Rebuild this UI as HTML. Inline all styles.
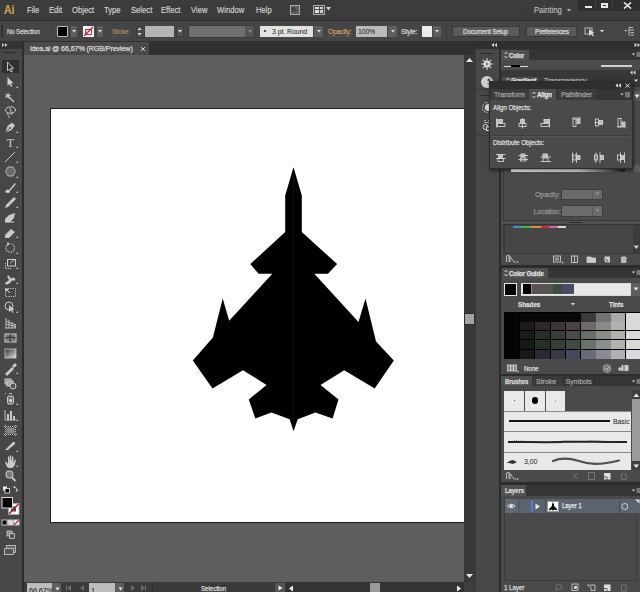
<!DOCTYPE html>
<html><head><meta charset="utf-8">
<style>
*{margin:0;padding:0;box-sizing:border-box}
html,body{width:640px;height:592px;overflow:hidden;background:#4a4a4a;font-family:"Liberation Sans",sans-serif;color:#d6d6d6}
.a{position:absolute}
#menu .t{transform:scaleX(.89);transform-origin:0 0;-webkit-text-stroke:0.15px currentColor}
.t{position:absolute;white-space:nowrap;line-height:1;-webkit-text-stroke:0.25px currentColor}
</style></head><body>

<!-- MENU BAR -->
<div class="a" style="left:0;top:0;width:640px;height:20px;background:#3c3c3c"></div>
<div class="a" style="left:0;top:20px;width:640px;height:1px;background:#2e2e2e"></div>


<!-- MENU TEXT -->
<div class="t" style="left:3.5px;top:2.8px;font-size:13px;font-weight:bold;color:#d9a850;letter-spacing:0px;transform:scaleX(0.8);transform-origin:0 0;-webkit-text-stroke:0">Ai</div>
<div id="menu" style="font-size:8.6px;color:#d6d6d6">
<div class="t" style="left:26.5px;top:5.6px">File</div>
<div class="t" style="left:48.5px;top:5.6px">Edit</div>
<div class="t" style="left:71.5px;top:5.6px">Object</div>
<div class="t" style="left:104px;top:5.6px">Type</div>
<div class="t" style="left:130.5px;top:5.6px">Select</div>
<div class="t" style="left:161px;top:5.6px">Effect</div>
<div class="t" style="left:190.5px;top:5.6px">View</div>
<div class="t" style="left:217px;top:5.6px">Window</div>
<div class="t" style="left:255.5px;top:5.6px">Help</div>
<div class="t" style="left:533.5px;top:5.6px;color:#bdbdbd">Painting</div>
</div>


<!-- menu right icons -->
<div class="a" style="left:280px;top:2px;width:1px;height:16px;background:#383838"></div>
<div class="a" style="left:289.5px;top:5px;width:10px;height:9.5px;border:1px solid #a8a8a8;background:#5c5c5c"></div>
<svg class="a" style="left:291px;top:7px" width="7" height="6"><path d="M1.5,5 V1 H3 Q4,1 4,2 Q4,3 3,3 H1.5 M4,5 V3.5 Q4.5,2.8 5.5,3" stroke="#2a2a2a" stroke-width="0.8" fill="none"/></svg>
<div class="a" style="left:313px;top:4.5px;width:12px;height:10px;border:1px solid #a8a8a8;background:#4a4a4a"></div>
<div class="a" style="left:315px;top:6.5px;width:4px;height:2.5px;background:#e0e0e0"></div>
<div class="a" style="left:315px;top:10px;width:4px;height:2.5px;background:#e0e0e0"></div>
<div class="a" style="left:320px;top:6.5px;width:3px;height:2.5px;background:#d0d0d0"></div>
<div class="a" style="left:320px;top:10px;width:3px;height:2.5px;background:#d0d0d0"></div>
<svg class="a" style="left:326px;top:7px" width="5" height="4"><polygon points="0,0 5,0 2.5,3.5" fill="#d0d0d0"/></svg>
<div class="a" style="left:525px;top:2px;width:1px;height:16px;background:#353535"></div>
<svg class="a" style="left:567px;top:9px" width="4" height="3"><polygon points="0,0 4,0 2,2.5" fill="#bdbdbd"/></svg>
<!-- window buttons -->
<div class="a" style="left:578px;top:0;width:62px;height:10.5px;background:#2f2f2f;border-radius:0 0 0 2px"></div>
<div class="a" style="left:595px;top:0;width:1px;height:10px;background:#404040"></div>
<div class="a" style="left:612px;top:0;width:1px;height:10px;background:#404040"></div>
<div class="a" style="left:584.5px;top:5.5px;width:7px;height:2px;background:#e8e8e8"></div>
<div class="a" style="left:600.5px;top:2.5px;width:7.5px;height:5.5px;border:2px solid #e8e8e8;border-top-width:2px"></div>
<svg class="a" style="left:623px;top:2px" width="9" height="7"><path d="M1,0.5 L8,6.5 M8,0.5 L1,6.5" stroke="#eee" stroke-width="1.6"/></svg>

<!-- CONTROL BAR -->
<div class="a" style="left:0;top:21px;width:640px;height:20px;background:#454545"></div>


<div class="a" style="left:1px;top:25px;width:2px;height:12px;background:#2f2f2f"></div>
<div class="t" style="left:7px;top:27.9px;font-size:7px;color:#d0d0d0;letter-spacing:-0.25px;transform:scaleX(0.89);transform-origin:0 0">No Selection</div>
<div class="a" style="left:51px;top:23px;width:1px;height:16px;background:#404040"></div>
<!-- fill swatch -->
<div class="a" style="left:57px;top:26px;width:11px;height:11px;border:1px solid #bdbdbd;background:#000;border-radius:1px"></div>
<div class="a" style="left:71px;top:26px;width:6px;height:11px;background:#5e5e5e"></div>
<svg class="a" style="left:72px;top:30px" width="4" height="3"><polygon points="0,0 4,0 2,2.5" fill="#e0e0e0"/></svg>
<!-- stroke swatch -->
<div class="a" style="left:83px;top:26px;width:11px;height:11px;background:#f2f2f2"></div>
<svg class="a" style="left:83px;top:26px" width="11" height="11"><rect x="2.5" y="3.5" width="6" height="5" fill="none" stroke="#b03a4a" stroke-width="1"/><path d="M1,10 L10,1" stroke="#c02030" stroke-width="1.2"/></svg>
<div class="a" style="left:97px;top:26px;width:6px;height:11px;background:#5e5e5e"></div>
<svg class="a" style="left:98px;top:30px" width="4" height="3"><polygon points="0,0 4,0 2,2.5" fill="#e0e0e0"/></svg>
<!-- Stroke label -->
<div class="t" style="left:112px;top:28px;font-size:7px;color:#a88358;letter-spacing:-0.2px;transform:scaleX(0.85);transform-origin:0 0">Stroke:</div><div class="a" style="left:112px;top:35.5px;width:17px;height:0;border-top:1px dotted #6a5a48"></div>
<div class="a" style="left:135.5px;top:25.5px;width:9px;height:12px;background:#4a4a4a;border:1px solid #3a3a3a"></div>
<svg class="a" style="left:137px;top:27px" width="5" height="9"><polygon points="0.5,3 4.5,3 2.5,0.5" fill="#ddd"/><polygon points="0.5,6 4.5,6 2.5,8.5" fill="#ddd"/></svg>
<div class="a" style="left:145px;top:26px;width:29px;height:11px;background:#b4b4b4"></div>
<div class="a" style="left:175.5px;top:26px;width:8px;height:11px;background:#505050;border:1px solid #3c3c3c"></div>
<svg class="a" style="left:178px;top:30px" width="4" height="3"><polygon points="0,0 4,0 2,2.5" fill="#e0e0e0"/></svg>
<div class="a" style="left:188px;top:25px;width:66.5px;height:13px;background:#3a3a3a"></div>
<div class="a" style="left:189px;top:26px;width:56px;height:11px;background:#6f6f6f"></div>
<div class="a" style="left:245px;top:26px;width:9px;height:11px;background:#555"></div>
<svg class="a" style="left:248px;top:30px" width="4" height="3"><polygon points="0,0 4,0 2,2.5" fill="#8a8a8a"/></svg>
<div class="a" style="left:260px;top:26px;width:53px;height:11px;background:#e2e2e2"></div>
<div class="a" style="left:263.5px;top:30.3px;width:2px;height:2px;background:#222;border-radius:50%"></div>
<div class="t" style="-webkit-text-stroke:0;left:272px;top:27.8px;font-size:7px;color:#1a1a1a;letter-spacing:-0.1px">3 pt. Round</div>
<div class="a" style="left:314px;top:26px;width:9px;height:11px;background:#5e5e5e"></div>
<svg class="a" style="left:316.5px;top:30px" width="4" height="3"><polygon points="0,0 4,0 2,2.5" fill="#e0e0e0"/></svg>
<!-- Opacity -->
<div class="t" style="left:328px;top:28px;font-size:7px;color:#c29660;letter-spacing:-0.3px">Opacity:</div><div class="a" style="left:328px;top:35.5px;width:23px;height:0;border-top:1px dotted #6a5a48"></div>
<div class="a" style="left:356px;top:26px;width:31px;height:11px;background:#bababa"></div>
<div class="t" style="-webkit-text-stroke:0;left:358px;top:27.8px;font-size:7px;color:#1a1a1a;letter-spacing:-0.2px">100%</div>
<div class="a" style="left:388px;top:26px;width:9px;height:11px;background:#5e5e5e"></div>
<svg class="a" style="left:390.5px;top:30px" width="4" height="3"><polygon points="0,0 4,0 2,2.5" fill="#e0e0e0"/></svg>
<div class="t" style="left:401px;top:28px;font-size:7px;color:#cfcfcf;letter-spacing:-0.2px">Style:</div>
<div class="a" style="left:422px;top:26px;width:10px;height:11px;background:#ececec"></div>
<div class="a" style="left:433px;top:26px;width:8px;height:11px;background:#5e5e5e"></div>
<svg class="a" style="left:435px;top:30px" width="4" height="3"><polygon points="0,0 4,0 2,2.5" fill="#e0e0e0"/></svg>
<div class="a" style="left:446px;top:23px;width:1px;height:16px;background:#3c3c3c"></div>
<!-- buttons -->
<div class="a" style="left:452px;top:26px;width:68px;height:11px;background:#5a5a5a;border:1px solid #3a3a3a"></div>
<div class="t" style="left:463px;top:28px;font-size:7px;color:#d8d8d8;letter-spacing:-0.2px;transform:scaleX(0.91);transform-origin:0 0">Document Setup</div>
<div class="a" style="left:526px;top:26px;width:51px;height:11px;background:#5a5a5a;border:1px solid #3a3a3a"></div>
<div class="t" style="left:534.5px;top:28px;font-size:7px;color:#d8d8d8;letter-spacing:-0.2px;transform:scaleX(0.95);transform-origin:0 0">Preferences</div>
<!-- right icons -->
<svg class="a" style="left:584px;top:26px" width="22" height="11">
<rect x="1" y="2" width="7" height="6" fill="none" stroke="#bbb" stroke-width="1"/>
<path d="M5,3 L5,10 L7,8 L9,10.5 L10,9.5 L8,7.5 L10.5,7 Z" fill="#ddd"/>
<polygon points="16,4 20,4 18,6.5" fill="#ddd"/>
</svg>
<svg class="a" style="left:624px;top:26px" width="12" height="11">
<polygon points="0.5,4 3,4 1.75,5.8" fill="#ddd"/>
<path d="M5,1.5 V9.5 M5,1.5 H9 M5,4 H10 M6.5,6.5 H10 M6.5,9 H10" stroke="#ccc" stroke-width="0.9"/>
</svg>

<!-- TAB BAR -->
<div class="a" style="left:22px;top:41px;width:453px;height:14px;background:#303030"></div>
<div class="a" style="left:24px;top:42px;width:125px;height:13px;background:#4a4a4a"></div>


<div class="t" style="left:30px;top:44.5px;font-size:7.5px;color:#d8d8d8;letter-spacing:-0.15px;transform:scaleX(0.96);transform-origin:0 0">idea.ai @ 66,67% (RGB/Preview)</div>
<svg class="a" style="left:140px;top:45.5px" width="6" height="6"><path d="M1,1 L5,5 M5,1 L1,5" stroke="#cfcfcf" stroke-width="1"/></svg>

<!-- LEFT TOOLBAR -->
<div class="a" style="left:0;top:41px;width:22px;height:551px;background:#474747"></div>
<div class="a" style="left:0;top:41px;width:22px;height:8px;background:#333333"></div>
<div class="a" style="left:22px;top:41px;width:2px;height:551px;background:#2c2c2c"></div>


<svg class="a" style="left:0;top:41px" width="22" height="551" viewBox="0 41 22 551">
<g fill="none" stroke="#c9c9c9" stroke-width="1">
<!-- header >> -->
<polygon points="2,43 4.5,45 2,47" fill="#c8c8c8" stroke="none"/><polygon points="5,43 7.5,45 5,47" fill="#c8c8c8" stroke="none"/>
<!-- grip -->
<path d="M4,52.5 H16" stroke="#2a2a2a" stroke-width="1.2"/>
</g>
<!-- selection highlight -->
<rect x="2" y="60" width="17" height="13" fill="#2f2f2f"/>
<path d="M7.5,62 L7.5,71 L9.5,69 L11,72 L12.3,71.4 L10.8,68.4 L13.5,68.3 Z" fill="none" stroke="#d0d0d0" stroke-width="0.9"/>
<!-- direct selection -->
<path d="M7.5,77 L7.5,86 L9.5,84 L11,87 L12.3,86.4 L10.8,83.4 L13.5,83.3 Z" fill="#d0d0d0"/>
<g fill="#c9c9c9">
<polygon points="16,88 18,88 18,86"/>
<polygon points="16,133 18,133 18,131"/>
<polygon points="16,148 18,148 18,146"/>
<polygon points="16,163 18,163 18,161"/>
<polygon points="16,178 18,178 18,176"/>
<polygon points="16,193 18,193 18,191"/>
<polygon points="16,208 18,208 18,206"/>
<polygon points="16,238 18,238 18,236"/>
<polygon points="16,254 18,254 18,252"/>
<polygon points="16,269 18,269 18,267"/>
<polygon points="16,284 18,284 18,282"/>
<polygon points="16,313 18,313 18,311"/>
<polygon points="16,374 18,374 18,372"/>
<polygon points="16,405 18,405 18,403"/>
<polygon points="16,421 18,421 18,419"/>
<polygon points="16,452 18,452 18,450"/>
<polygon points="16,467 18,467 18,465"/>
</g>
<g fill="none" stroke="#c9c9c9" stroke-width="1">
<!-- magic wand -->
<path d="M8,96 L14,102" stroke-width="1.3"/>
<path d="M8,92 L8.8,94.5 L11.5,95 L9,96.3 L9.3,99 L7.5,97.2 L5,98 L6.3,95.8 L5,93.5 L7.6,94.5 Z" fill="#c9c9c9" stroke="none"/>
<!-- lasso -->
<ellipse cx="10.5" cy="110" rx="5" ry="3.2"/>
<path d="M8,113 C7,116 10,116 9,118 M10,108 L12,115" />
<!-- pen -->
<path d="M5.5,132.5 L7.5,126 L12,122.5 L15,125.5 L11.5,130 Z" fill="#c9c9c9" stroke="none"/><path d="M5.5,132.5 L10,128" stroke="#474747" stroke-width="0.9"/><circle cx="10" cy="128" r="0.9" fill="#474747" stroke="none"/>
<!-- type T -->
<text x="10.5" y="147" font-family="Liberation Serif" font-size="12" text-anchor="middle" fill="#cfcfcf" stroke="none">T</text>
<!-- line -->
<path d="M5,162 L15,152" stroke-width="1"/>
<!-- polygon -->
<polygon points="8,167 13,167 15.5,171.5 13,176 8,176 5.5,171.5" fill="#6a6a6a" stroke="#bbb" stroke-width="0.9"/>
<!-- paintbrush -->
<path d="M5,192 C6,189 8,189 9,190 L15,183 L16,184 L10,191 C10,193 8,194 5,192 Z" fill="#c9c9c9" stroke="none"/>
<!-- pencil -->
<path d="M5,208 L6,205 L14,197 L16,199 L8,207 Z" fill="#c9c9c9" stroke="none"/>
<!-- blob brush -->
<path d="M5,219 L9,215 L15,213 L14,218 L10,222 L5,222 Z" fill="#c9c9c9" stroke="none"/>
<path d="M5,222 L14,222" stroke="#ddd"/>
<!-- eraser -->
<path d="M5,235 L11,229 L15,232 L9,238 L5,238 Z" fill="#c9c9c9" stroke="none"/>
<!-- rotate -->
<path d="M8.5,244 A4.3,4.3 0 1 0 11,243.7" stroke-dasharray="1.4,0.9" stroke-width="1.1"/>
<polygon points="7,242.2 10,243.5 7.5,246" fill="#c9c9c9" stroke="none"/>
<!-- scale -->
<rect x="7.5" y="259.5" width="8" height="6.5" />
<path d="M5.5,263 V268.5 H11" stroke-dasharray="1.2,0.8"/>
<path d="M10,263 L15,259.5" stroke-width="0.8"/>
<!-- warp -->
<path d="M5,284 C6,281 8,282 9,280 L7,276 L9,275.5 L11,279 C12,277 14,277 15.5,279 L14.5,281 C13,279.5 12,280.5 11,282 C9,284 7,285 5,284 Z" fill="#c9c9c9" stroke="none"/>
<!-- free transform -->
<rect x="5.5" y="288.5" width="10" height="8" stroke-dasharray="1.2,1.2"/>
<path d="M6,289 L10,293" fill="none"/>
<polygon points="5,288 9,289 6,292" fill="#c9c9c9" stroke="none"/>
<!-- shape builder -->
<circle cx="9" cy="306" r="4" />
<path d="M9,305 L9,312 L11,310.5 L12.5,313 L13.5,312.5 L12.2,310 L14.5,310 Z" fill="#c9c9c9" stroke="none"/>
<!-- perspective grid -->
<path d="M6,318 V328 M9,320 V328 M12,322 V328 M15,324 V328 M5,328 H16 M6,321 L16,325 M6,324 L16,326.5" stroke-width="0.9"/>
<!-- mesh -->
<rect x="5" y="334" width="11" height="8" fill="#777" stroke="#ccc"/>
<path d="M5,338 Q10,336 16,338 M10.5,334 Q9,338 10.5,342" stroke="#222" stroke-width="0.9"/>
<!-- gradient -->
<defs><linearGradient id="gtool" x1="0" x2="1" y1="0" y2="1"><stop offset="0" stop-color="#333"/><stop offset="1" stop-color="#ddd"/></linearGradient></defs>
<rect x="5" y="349" width="11" height="9" fill="url(#gtool)" stroke="#ccc" stroke-width="0.8"/>
<!-- eyedropper -->
<path d="M5,374 L12,367 L14,369 L7,376 Z" fill="#c9c9c9" stroke="none"/>
<path d="M12,366 L15,363 L17,365 L14,368" fill="#c9c9c9" stroke="none"/>
<!-- blend -->
<rect x="5" y="379" width="6" height="5" fill="#888"/>
<rect x="7" y="381" width="6" height="5" fill="#aaa"/>
<circle cx="13" cy="386" r="3" fill="#555" stroke="#ccc"/>
<!-- symbol sprayer -->
<rect x="7.5" y="396" width="6" height="8" rx="1.5" fill="#777" stroke="#ccc"/>
<circle cx="10.5" cy="400.5" r="1.5" fill="#ddd" stroke="none"/>
<path d="M9,393.5 H12 M6,394 L5,393" stroke-width="0.9"/>
<!-- column graph -->
<path d="M5,420 H16 M5,410 V420" stroke-width="0.9"/>
<rect x="7" y="414" width="2" height="6" fill="#c9c9c9" stroke="none"/>
<rect x="10" y="411" width="2" height="9" fill="#c9c9c9" stroke="none"/>
<rect x="13" y="416" width="2" height="4" fill="#c9c9c9" stroke="none"/>
<!-- artboard -->
<rect x="6.5" y="427.5" width="8" height="6" fill="#888" stroke="none"/>
<path d="M4,426.5 H17 M4,434.5 H17 M5.5,425 V436 M15.5,425 V436" stroke-dasharray="1,1" stroke-width="0.9"/>
<!-- slice -->
<path d="M5,450 L13,442 L15,442 L15,444 L8,450 Z" fill="#c9c9c9" stroke="none"/>
<!-- hand -->
<path d="M7,467 L5,462 L6.2,461.5 L8,464 L8,456.5 L9.2,456.5 L9.5,462 L10,455.5 L11.2,455.5 L11.5,462 L12.2,456.5 L13.4,456.5 L13.5,463 L15,459.5 L16,460 L14.5,466 L12,468 L9,468 Z" fill="#c9c9c9" stroke="none"/>
<!-- zoom -->
<circle cx="9.5" cy="474.5" r="3.5" stroke-width="1.1" fill="#7a7a7a"/>
<path d="M12,477.5 L15.5,481" stroke-width="1.8"/>
<!-- default fill stroke small -->
<rect x="3" y="486.5" width="4" height="4" fill="#eee" stroke="none"/>
<rect x="5" y="488.5" width="4.5" height="4.5" fill="#000" stroke="#ddd" stroke-width="0.9"/>
<path d="M14,487 Q17,487 17,490.5" stroke-width="0.9"/><polygon points="13,487 15,485.5 15,488.5" fill="#c9c9c9" stroke="none"/><polygon points="17,492 15.5,490 18.5,490" fill="#c9c9c9" stroke="none"/>
<!-- fill / stroke -->
<rect x="8.5" y="503.5" width="10.5" height="11" fill="#fff" stroke="#aaa" stroke-width="0.8"/>
<rect x="11" y="506.5" width="5" height="5" fill="#474747" stroke="none"/>
<path d="M9,514 L18.5,504" stroke="#c2222e" stroke-width="1.6"/>

<rect x="2" y="497.5" width="10.5" height="10.5" fill="#000" stroke="#ddd" stroke-width="1"/>
<!-- color modes -->
<rect x="2" y="520" width="5" height="5" fill="#000"/>
<rect x="8" y="520" width="5" height="5" fill="#ddd"/>
<rect x="14" y="520" width="5" height="5" fill="#fff"/>
<path d="M14,525 L19,520" stroke="#c2222e" stroke-width="1.2"/>
<!-- drawing modes -->
<rect x="7" y="531" width="5" height="5" fill="#888" stroke="#ccc" stroke-width="0.8"/>
<rect x="9.5" y="533.5" width="5" height="5" fill="#555" stroke="#ccc" stroke-width="0.8"/>
<!-- screen mode -->
<rect x="6.5" y="545.5" width="9" height="7" fill="#666" stroke="#ccc" stroke-width="0.8"/>
<rect x="4.5" y="548.5" width="9" height="6" fill="#555" stroke="#ccc" stroke-width="0.8"/>
</g>
</svg>

<!-- CANVAS -->
<div class="a" style="left:24px;top:55px;width:440px;height:527px;background:#5e5e5e"></div>
<div class="a" style="left:50px;top:108px;width:414px;height:415px;background:#1e1e1e"></div>
<div class="a" style="left:51px;top:109px;width:413px;height:413px;background:#ffffff"></div>

<!-- JET -->
<svg class="a" style="left:0;top:0" width="640" height="592" viewBox="0 0 640 592">
<polygon fill="#000" points="293.5,167.3 285.2,195.5 285.2,232 250.3,264.1 258.6,273.7 272.3,273.7 229.2,320.7 222.7,298.4 212.9,337.4 192.8,360.6 212.5,388.5 243,370.3 266.6,384.9 248.8,399.5 255.3,418.4 271.4,412.4 289.7,419.3 293.5,431.3 297.7,419.3 315.4,412.4 332.6,418.4 338.5,399.5 320.5,384.9 344.2,370.3 374.7,388.5 393.8,360.6 376,341.5 365.5,298.4 358.5,322 314.3,273.7 328,273.7 337.1,264.1 301.8,232 301.8,195.5"/>
<line x1="293.5" y1="172" x2="293.5" y2="428" stroke="#161616" stroke-width="0.7"/>
</svg>

<!-- V SCROLLBAR -->
<div class="a" style="left:464px;top:55px;width:11px;height:537px;background:#383838"></div>
<svg class="a" style="left:465px;top:57px" width="9" height="6"><polygon points="1,5 8,5 4.5,1" fill="#e6e6e6"/></svg>
<div class="a" style="left:464px;top:313px;width:11px;height:12px;background:#2c2c2c"></div><div class="a" style="left:465px;top:314px;width:9px;height:10px;background:#a4a4a4"></div>
<svg class="a" style="left:465px;top:573px" width="9" height="6"><polygon points="1,1 8,1 4.5,5" fill="#e6e6e6"/></svg>

<!-- DOCK COLUMN -->
<div class="a" style="left:475px;top:41px;width:25px;height:551px;background:#474747"></div>
<div class="a" style="left:475px;top:41px;width:1px;height:551px;background:#3a3a3a"></div>
<div class="a" style="left:475px;top:41px;width:25px;height:8px;background:#2f2f2f"></div>
<svg class="a" style="left:490px;top:42px" width="8" height="6"><polygon points="4,0.8 1.5,3 4,5.2" fill="#d0d0d0"/><polygon points="7,0.8 4.5,3 7,5.2" fill="#d0d0d0"/></svg>
<div class="a" style="left:481px;top:52.5px;width:12px;height:1.2px;background:#2a2a2a"></div>
<svg class="a" style="left:480px;top:57px" width="14" height="14"><g stroke="#cfcfcf" stroke-width="1.1"><path d="M7,1 V13 M1,7 H13 M2.8,2.8 L11.2,11.2 M11.2,2.8 L2.8,11.2"/></g><circle cx="7" cy="7" r="3.5" fill="#ddd"/><circle cx="7" cy="7" r="1.5" fill="#888"/></svg>
<svg class="a" style="left:480px;top:75px" width="14" height="14"><circle cx="7" cy="7" r="6" fill="#cfcfcf"/><circle cx="9" cy="5" r="1.6" fill="#555"/><path d="M7,8 L13,9 L12,12 Z" fill="#474747"/></svg>
<div class="a" style="left:476px;top:89px;width:24px;height:1px;background:#3a3a3a"></div>
<div class="a" style="left:481px;top:95px;width:12px;height:1.2px;background:#2a2a2a"></div>
<svg class="a" style="left:480px;top:101px" width="14" height="13"><circle cx="7.5" cy="6.5" r="5" fill="none" stroke="#bdbdbd" stroke-dasharray="1.2,1.3" stroke-width="1.1"/><circle cx="8.5" cy="6.5" r="3.6" fill="#d6d6d6"/></svg>
<svg class="a" style="left:480px;top:119px" width="14" height="13"><path d="M4,3.5 H10 M4,1.5 H6 M8,1.5 H10" stroke="#bdbdbd" stroke-width="0.9"/><circle cx="5.5" cy="8" r="2.5" fill="#474747" stroke="#d6d6d6" stroke-width="1"/><rect x="6.5" y="8" width="4" height="3.5" fill="#474747" stroke="#d6d6d6" stroke-width="1"/></svg>
<div class="a" style="left:476px;top:135px;width:24px;height:1px;background:#3a3a3a"></div>
<div class="a" style="left:499px;top:41px;width:2px;height:551px;background:#2c2c2c"></div>

<!-- RIGHT PANELS -->
<div class="a" style="left:501px;top:41px;width:139px;height:551px;background:#4a4a4a"></div>
<div class="a" style="left:501px;top:41px;width:139px;height:8px;background:#2f2f2f"></div>
<svg class="a" style="left:634px;top:42px" width="6" height="6"><polygon points="0.5,0.8 3,3 0.5,5.2" fill="#d0d0d0"/><polygon points="3.5,0.8 6,3 3.5,5.2" fill="#d0d0d0"/></svg>
<!-- color panel -->
<div class="a" style="left:501px;top:49px;width:139px;height:11px;background:#353535"></div>
<div class="a" style="left:501px;top:49.5px;width:27.5px;height:10.5px;background:#505050"></div>
<svg class="a" style="left:504px;top:51px" width="4" height="8"><path d="M0.5,3 L2,1 L3.5,3 M0.5,5 L2,7 L3.5,5" stroke="#ddd" stroke-width="0.8" fill="none"/></svg>
<div class="t" style="left:509px;top:51.8px;font-size:7px;font-weight:bold;color:#e0e0e0;letter-spacing:-0.1px;transform:scaleX(0.84);transform-origin:0 0">Color</div>
<svg class="a" style="left:632px;top:52px" width="8" height="6"><polygon points="0,1.5 3,1.5 1.5,3.5" fill="#ddd"/><rect x="4.5" y="0" width="3.5" height="5" fill="#777"/></svg>
<div class="a" style="left:501px;top:60px;width:139px;height:10px;background:#4b4b4b"></div>
<div class="a" style="left:504px;top:65.5px;width:7px;height:1px;background:#dcdcdc"></div>
<div class="a" style="left:511px;top:65.3px;width:9px;height:1.5px;background:#000"></div>
<div class="a" style="left:520px;top:65.5px;width:8px;height:1px;background:#dcdcdc"></div>
<div class="a" style="left:601px;top:65px;width:31px;height:1.6px;background:#cfcfcf"></div>
<div class="a" style="left:501px;top:70px;width:139px;height:6px;background:#383838"></div>
<svg class="a" style="left:629px;top:69.5px" width="7" height="5"><polygon points="3.5,0.3 1,2.5 3.5,4.7" fill="#d0d0d0"/><polygon points="6.5,0.3 4,2.5 6.5,4.7" fill="#d0d0d0"/></svg>
<!-- gradient panel (under floating) -->
<div class="a" style="left:501px;top:76px;width:139px;height:11px;background:#353535"></div>
<div class="a" style="left:502px;top:77px;width:36px;height:10px;background:#505050"></div>
<svg class="a" style="left:506px;top:77px" width="4" height="8"><path d="M0.5,3 L2,1 L3.5,3 M0.5,5 L2,7 L3.5,5" stroke="#ddd" stroke-width="0.8" fill="none"/></svg>
<div class="t" style="left:511px;top:77px;font-size:7px;font-weight:bold;color:#e0e0e0;transform:scaleX(0.88);transform-origin:0 0">Gradient</div>
<div class="a" style="left:539px;top:77px;width:50px;height:10px;background:#3b3b3b"></div><div class="t" style="left:544px;top:77px;font-size:7px;color:#aaa">Transparency</div>
<svg class="a" style="left:634px;top:79px" width="5" height="4"><polygon points="0,0.5 4,0.5 2,3" fill="#ddd"/></svg>
<div class="a" style="left:633px;top:91px;width:7px;height:10px;background:#5a5a5a"></div>
<svg class="a" style="left:634px;top:94px" width="6" height="5"><polygon points="0.5,0.5 5.5,0.5 3,4" fill="#eee"/></svg>
<svg class="a" style="left:633px;top:162px" width="7" height="10"><path d="M1,4 Q3.5,1 6,4 Z" fill="#6a6a6a"/><rect x="1" y="5" width="6" height="4" fill="#5a5a5a" stroke="#6e6e6e" stroke-width="0.8"/></svg>
<div class="a" style="left:502.5px;top:100px;width:1px;height:152px;background:#3a3a3a"></div>
<!-- gradient slider -->
<div class="a" style="left:510.5px;top:169px;width:114.5px;height:2.5px;background:linear-gradient(to right,#f4f4f4,#e0e0e0 60%,#222)"></div>
<div class="t" style="left:535px;top:191px;font-size:7px;color:#959595;letter-spacing:-0.1px">Opacity:</div>
<div class="a" style="left:560.5px;top:188.5px;width:42px;height:11.5px;background:#6b6b6b;border:1px solid #3e3e3e"></div>
<div class="a" style="left:592px;top:189.5px;width:1px;height:9.5px;background:#5a5a5a"></div>
<svg class="a" style="left:595px;top:192px" width="5" height="4"><polygon points="0.5,0.5 4.5,0.5 2.5,3" fill="#999"/></svg>
<div class="t" style="left:533.5px;top:207.5px;font-size:7px;color:#959595;letter-spacing:-0.1px">Location:</div>
<div class="a" style="left:560.5px;top:205px;width:42px;height:11.5px;background:#6b6b6b;border:1px solid #3e3e3e"></div>
<div class="a" style="left:592px;top:206px;width:1px;height:9.5px;background:#5a5a5a"></div>
<svg class="a" style="left:595px;top:208.5px" width="5" height="4"><polygon points="0.5,0.5 4.5,0.5 2.5,3" fill="#999"/></svg>
<div class="a" style="left:502px;top:219.5px;width:138px;height:1px;background:#383838"></div>
<div class="a" style="left:502px;top:220.5px;width:138px;height:3.5px;background:#505050"></div>
<div class="a" style="left:569px;top:222px;width:12px;height:1px;background:#2a2a2a"></div>
<div class="a" style="left:502px;top:224px;width:138px;height:1px;background:#333"></div>
<!-- swatches list -->
<div class="a" style="left:504px;top:225px;width:129px;height:27.5px;background:#464646;border-left:1px solid #3a3a3a"></div>
<div class="a" style="left:512.5px;top:225.5px;width:53px;height:2.5px;background:linear-gradient(to right,#3d8fd0 0,#3d8fd0 17%,#4cae4c 17%,#4cae4c 34%,#d98b3a 34%,#d98b3a 52%,#c8323c 52%,#c8323c 68%,#cf6b9a 68%,#cf6b9a 84%,#d8d8d8 84%)"></div>
<div class="a" style="left:632.5px;top:225px;width:7.5px;height:27.5px;background:#3c3c3c"></div>
<svg class="a" style="left:633px;top:245px" width="7" height="5"><polygon points="0.5,0.5 6,0.5 3.25,4" fill="#ccc"/></svg>
<div class="a" style="left:502px;top:252.5px;width:138px;height:1px;background:#383838"></div>
<!-- swatches bottom icons -->
<svg class="a" style="left:502px;top:253px" width="138" height="12" viewBox="502 253 138 12">
<g fill="none" stroke="#c8c8c8" stroke-width="0.9">
<path d="M506.5,262 V256 L509,255 V262 M510,262 V256.5 L514,262 H516"/>
<circle cx="517.5" cy="262" r="0.5" fill="#ccc"/>
<rect x="553.5" y="256" width="7" height="6"/><rect x="555" y="257.5" width="4" height="3" fill="#999" stroke="none"/>
<circle cx="562.5" cy="262.5" r="0.5" fill="#ccc"/>
<rect x="571.5" y="256" width="6" height="6.5"/><path d="M574.5,256 V262.5"/>
<path d="M587,257 H591 L592,258 H595.5 V262.5 H587 Z" fill="#ccc"/>
<path d="M604.5,256.5 H610 V262.5 H606 L604.5,261 Z" fill="#ccc" stroke="none"/><path d="M606,259 L608,262" stroke="#444"/>
<path d="M620.5,257.5 H627 M621.5,258 V262.5 H626 V258 M622.5,256.5 H625" fill="#bbb" stroke="#bbb"/>
</g></svg>
<div class="a" style="left:501px;top:265px;width:139px;height:2.5px;background:#2c2c2c"></div>

<!-- COLOR GUIDE -->
<div class="a" style="left:501px;top:267.5px;width:139px;height:10px;background:#353535"></div>
<div class="a" style="left:501.5px;top:267.5px;width:46px;height:10px;background:#505050"></div>
<svg class="a" style="left:504px;top:269px" width="4" height="8"><path d="M0.5,3 L2,1 L3.5,3 M0.5,5 L2,7 L3.5,5" stroke="#ddd" stroke-width="0.8" fill="none"/></svg>
<div class="t" style="left:509px;top:269.5px;font-size:7px;font-weight:bold;color:#e0e0e0;letter-spacing:-0.15px;transform:scaleX(0.9);transform-origin:0 0">Color Guide</div>
<svg class="a" style="left:632px;top:270px" width="8" height="6"><polygon points="0,1.5 3,1.5 1.5,3.5" fill="#ddd"/><rect x="4.5" y="0" width="3.5" height="5" fill="#777"/></svg>
<div class="a" style="left:504px;top:282.5px;width:12.5px;height:13px;background:#000;border:1px solid #e8e8e8"></div>
<div class="a" style="left:521px;top:282.5px;width:109.5px;height:13px;background:#e6e6e6;border:1px solid #d8d8d8"></div>
<div class="a" style="left:522.5px;top:284px;width:51px;height:10px;background:linear-gradient(to right,#000 0,#000 17%,#5a5252 17%,#5a5252 40%,#555551 40%,#555551 58%,#3f4a40 58%,#3f4a40 76%,#4a4c66 76%,#4a4c66 100%)"></div>
<div class="a" style="left:531px;top:284px;width:1px;height:10px;background:#888"></div>
<div class="a" style="left:631px;top:282.5px;width:8.5px;height:13px;background:#5e5e5e"></div>
<svg class="a" style="left:632.5px;top:287px" width="6" height="4"><polygon points="0.5,0.5 5.5,0.5 3,3.5" fill="#eee"/></svg>
<div class="t" style="left:518px;top:301px;font-size:7px;font-weight:bold;color:#dcdcdc;letter-spacing:-0.1px;transform:scaleX(0.92);transform-origin:0 0">Shades</div>
<svg class="a" style="left:570.5px;top:303px" width="4" height="3"><polygon points="0,0 4,0 2,2.5" fill="#ddd"/></svg>
<div class="t" style="left:608.5px;top:301px;font-size:7px;font-weight:bold;color:#dcdcdc;letter-spacing:-0.1px;transform:scaleX(0.9);transform-origin:0 0">Tints</div>
<svg class="a" style="left:504px;top:312px" width="136" height="47" viewBox="504 312 136 47" shape-rendering="crispEdges">
<rect x="504" y="312" width="136" height="47" fill="#000"/>
<g id="cg">
<rect x="504" y="312" width="15" height="47" fill="#050505"/>
<rect x="519.5" y="312.5" width="61" height="9" fill="#080808"/>
<rect x="581" y="312.5" width="14.5" height="9" fill="#3a3a3a"/>
<rect x="596" y="312.5" width="14.5" height="9" fill="#737373"/>
<rect x="611" y="312.5" width="14" height="9" fill="#a9a9a9"/>
<rect x="626" y="312.5" width="14" height="9" fill="#d9d9d9"/>

<rect x="519.5" y="322" width="14.5" height="8" fill="#1c1a1a"/>
<rect x="535" y="322" width="14.5" height="8" fill="#2e2828"/>
<rect x="550.5" y="322" width="14" height="8" fill="#3e3435"/>
<rect x="565.5" y="322" width="14.5" height="8" fill="#4c4042"/>
<rect x="581" y="322" width="14.5" height="8" fill="#6f696a"/>
<rect x="596" y="322" width="14.5" height="8" fill="#8b8889"/>
<rect x="611" y="322" width="14" height="8" fill="#b1b0b0"/>
<rect x="626" y="322" width="14" height="8" fill="#d9d9d9"/>

<rect x="519.5" y="331" width="14.5" height="8" fill="#1b1b1a"/>
<rect x="535" y="331" width="14.5" height="8" fill="#2d2d2a"/>
<rect x="550.5" y="331" width="14" height="8" fill="#3c3c39"/>
<rect x="565.5" y="331" width="14.5" height="8" fill="#4b4b48"/>
<rect x="581" y="331" width="14.5" height="8" fill="#6b6b67"/>
<rect x="596" y="331" width="14.5" height="8" fill="#8b8b88"/>
<rect x="611" y="331" width="14" height="8" fill="#b1b1ae"/>
<rect x="626" y="331" width="14" height="8" fill="#d9d9d8"/>

<rect x="519.5" y="340" width="14.5" height="8.5" fill="#151a16"/>
<rect x="535" y="340" width="14.5" height="8.5" fill="#263027"/>
<rect x="550.5" y="340" width="14" height="8.5" fill="#353f37"/>
<rect x="565.5" y="340" width="14.5" height="8.5" fill="#3f4c41"/>
<rect x="581" y="340" width="14.5" height="8.5" fill="#6a736b"/>
<rect x="596" y="340" width="14.5" height="8.5" fill="#8a8f8b"/>
<rect x="611" y="340" width="14" height="8.5" fill="#b0b4b1"/>
<rect x="626" y="340" width="14" height="8.5" fill="#d8dad8"/>

<rect x="519.5" y="349.5" width="14.5" height="9" fill="#18181f"/>
<rect x="535" y="349.5" width="14.5" height="9" fill="#2a2a37"/>
<rect x="550.5" y="349.5" width="14" height="9" fill="#383849"/>
<rect x="565.5" y="349.5" width="14.5" height="9" fill="#46465d"/>
<rect x="581" y="349.5" width="14.5" height="9" fill="#6a6a79"/>
<rect x="596" y="349.5" width="14.5" height="9" fill="#8a8a96"/>
<rect x="611" y="349.5" width="14" height="9" fill="#b0b0b9"/>
<rect x="626" y="349.5" width="14" height="9" fill="#d8d8de"/>
</g>
</svg>
<svg class="a" style="left:504px;top:362px" width="136" height="11" viewBox="504 362 136 11">
<g fill="none" stroke="#c8c8c8" stroke-width="0.9">
<rect x="507.5" y="365" width="9" height="6" fill="#888"/><path d="M510.5,365 V371 M513.5,365 V371" stroke="#ddd"/>
<circle cx="518" cy="371.5" r="0.5" fill="#ccc"/>
<circle cx="607" cy="368.5" r="3.8" fill="#777" stroke="#aaa"/><path d="M605,368 L607,370 L609,367" stroke="#ddd" stroke-width="0.8"/>
<rect x="621.5" y="365" width="7" height="6" fill="#ccc" stroke="none"/><path d="M618,369 H622 M620,367 V371" stroke="#eee" stroke-width="1.1"/><path d="M624,365 V371" stroke="#555"/>
</g></svg>
<div class="t" style="left:524px;top:365px;font-size:7px;color:#dcdcdc;letter-spacing:-0.1px;transform:scaleX(0.88);transform-origin:0 0">None</div>
<div class="a" style="left:501px;top:373.5px;width:139px;height:2.5px;background:#2c2c2c"></div>

<!-- BRUSHES -->
<div class="a" style="left:501px;top:376px;width:139px;height:10px;background:#353535"></div>
<div class="a" style="left:501px;top:376px;width:31px;height:10px;background:#505050"></div>
<div class="t" style="left:505px;top:378px;font-size:7px;font-weight:bold;color:#d8d8d8;letter-spacing:-0.1px;transform:scaleX(0.85);transform-origin:0 0">Brushes</div>
<div class="a" style="left:532px;top:376px;width:31px;height:10px;background:#3a3a3a"></div>
<div class="t" style="left:536px;top:378px;font-size:7px;color:#a0a0a0;letter-spacing:0px">Stroke</div>
<div class="t" style="left:565.5px;top:378px;font-size:7px;color:#a0a0a0;letter-spacing:-0.1px">Symbols</div>
<div class="a" style="left:594px;top:377px;width:1px;height:9px;background:#2a2a2a"></div>
<svg class="a" style="left:632px;top:379px" width="8" height="6"><polygon points="0,1.5 3,1.5 1.5,3.5" fill="#ddd"/><rect x="4.5" y="0" width="3.5" height="5" fill="#777"/></svg>
<div class="a" style="left:502px;top:386px;width:138px;height:84px;background:#4a4a4a"></div>
<div class="a" style="left:504px;top:390.5px;width:20px;height:20px;background:#e9e9e9"></div>
<div class="a" style="left:525px;top:390.5px;width:19.5px;height:20px;background:#e9e9e9"></div>
<div class="a" style="left:545.5px;top:390.5px;width:19.5px;height:20px;background:#e9e9e9"></div>
<div class="a" style="left:513.6px;top:399.8px;width:1.6px;height:1.6px;background:#222;border-radius:50%"></div>
<div class="a" style="left:531.8px;top:397.4px;width:6.4px;height:6.4px;background:#000;border-radius:50%"></div>
<div class="a" style="left:555px;top:399.5px;width:0.8px;height:2.5px;background:#aaa"></div>
<div class="a" style="left:504px;top:411px;width:126.5px;height:20px;background:#e9e9e9"></div>
<div class="a" style="left:508.5px;top:420.3px;width:101.5px;height:2px;background:#111"></div>
<div class="t" style="-webkit-text-stroke:0;left:613px;top:418px;font-size:7px;color:#222;letter-spacing:-0.1px">Basic</div>
<div class="a" style="left:504px;top:431.5px;width:126.5px;height:20px;background:#e9e9e9"></div>
<svg class="a" style="left:504px;top:431.5px" width="127" height="20"><path d="M4,10 C20,9.5 40,10.8 60,9.8 C80,9.2 100,10.5 123,10" stroke="#222" stroke-width="2" fill="none"/><path d="M10,8.8 L30,9.6 M50,10.9 L70,10.3 M85,8.9 L110,9.5" stroke="#444" stroke-width="0.8" stroke-dasharray="1,1"/></svg>
<div class="a" style="left:504px;top:452px;width:126.5px;height:18px;background:#e9e9e9"></div>
<svg class="a" style="left:504px;top:452px" width="127" height="18"><path d="M5,9 L9,8 L13,10 L9,12 L5,11 Z" fill="#333"/><path d="M3,10.5 H6" stroke="#333" stroke-width="1"/><path d="M49,9 C56,6 65,6 75,9 C85,12.5 95,13.5 115,8.5" stroke="#505050" stroke-width="2.2" fill="none" stroke-linecap="round"/></svg>
<div class="t" style="-webkit-text-stroke:0;left:524px;top:458px;font-size:7px;color:#222;letter-spacing:-0.1px">3,00</div>
<div class="a" style="left:504px;top:410.5px;width:127px;height:0.8px;background:#8a8a8a"></div><div class="a" style="left:504px;top:431px;width:127px;height:0.8px;background:#8a8a8a"></div><div class="a" style="left:504px;top:451.5px;width:127px;height:0.8px;background:#8a8a8a"></div>
<div class="a" style="left:632px;top:390px;width:8px;height:80px;background:#9a9a9a"></div>
<div class="a" style="left:632px;top:390px;width:8px;height:9px;background:#3e3e3e"></div>
<svg class="a" style="left:633px;top:393px" width="7" height="5"><polygon points="0.5,4 6,4 3.25,0.5" fill="#eee"/></svg>
<div class="a" style="left:632px;top:461px;width:8px;height:9px;background:#3e3e3e"></div>
<svg class="a" style="left:633px;top:464px" width="7" height="5"><polygon points="0.5,0.5 6,0.5 3.25,4" fill="#eee"/></svg>
<svg class="a" style="left:502px;top:470px" width="138" height="12" viewBox="502 470 138 12">
<g fill="none" stroke="#c8c8c8" stroke-width="0.9">
<path d="M506.5,479 V473 L509,472 V479 M510,479 V473.5 L514,479 H516"/>
<circle cx="517.5" cy="479" r="0.5" fill="#ccc"/>
<path d="M573,473 L578,479 M578,473 L573,479" stroke="#777"/>
<rect x="588.5" y="472.5" width="6" height="7" stroke="#777"/>
<rect x="604" y="473" width="6.5" height="6.5" fill="#ddd" stroke="none"/><path d="M604,477 H607 V480" stroke="#555"/>
<path d="M620.5,474 H627 M621.5,474.5 V479.5 H626 V474.5" stroke="#777"/>
</g></svg>
<div class="a" style="left:501px;top:482px;width:139px;height:3px;background:#2c2c2c"></div>

<!-- LAYERS -->
<div class="a" style="left:501px;top:485px;width:139px;height:10.5px;background:#353535"></div>
<div class="a" style="left:501px;top:485px;width:25px;height:10.5px;background:#505050"></div>
<div class="t" style="left:505px;top:487.3px;font-size:7px;font-weight:bold;color:#d8d8d8;letter-spacing:-0.1px;transform:scaleX(0.86);transform-origin:0 0">Layers</div>
<svg class="a" style="left:632px;top:488px" width="8" height="6"><polygon points="0,1.5 3,1.5 1.5,3.5" fill="#ddd"/><rect x="4.5" y="0" width="3.5" height="5" fill="#777"/></svg>
<div class="a" style="left:502px;top:495.5px;width:138px;height:86px;background:#4a4a4a"></div>
<div class="a" style="left:504px;top:498.5px;width:1px;height:81px;background:#3c3c3c"></div>
<div class="a" style="left:505px;top:499px;width:135px;height:13.5px;background:#5b6270"></div>
<div class="a" style="left:505px;top:499px;width:12.5px;height:13.5px;background:#626a78"></div>
<div class="a" style="left:517.5px;top:499px;width:1px;height:13.5px;background:#48505c"></div>
<div class="a" style="left:530.5px;top:499px;width:1px;height:13.5px;background:#48505c"></div>
<div class="a" style="left:531px;top:499.5px;width:2px;height:12.5px;background:#4a7ee0"></div>
<div class="a" style="left:544.5px;top:499px;width:1px;height:13.5px;background:#48505c"></div>
<div class="a" style="left:618.5px;top:499px;width:1px;height:13.5px;background:#48505c"></div>
<svg class="a" style="left:505px;top:499px" width="14" height="14"><path d="M2.5,7 Q6.25,3.5 10,7 Q6.25,10.5 2.5,7 Z" fill="none" stroke="#e8e8e8" stroke-width="0.9"/><circle cx="6.25" cy="7" r="1.5" fill="#e8e8e8"/></svg>
<svg class="a" style="left:535px;top:502.5px" width="6" height="7"><polygon points="0.5,0.5 5,3.5 0.5,6.5" fill="#e8e8e8"/></svg>
<div class="a" style="left:547px;top:500.5px;width:11.5px;height:11px;background:#fff;border:0.5px solid #999"></div>
<svg class="a" style="left:547px;top:500.5px" width="12" height="11"><polygon points="6,1 7,3.5 7,5 9.5,7.5 10.5,9.5 7,8.5 6,10 5,8.5 1.5,9.5 2.5,7.5 5,5 5,3.5" fill="#000"/></svg>
<div class="t" style="left:562px;top:501.5px;font-size:7.3px;color:#e8e8e8;letter-spacing:-0.1px;transform:scaleX(0.82);transform-origin:0 0">Layer 1</div>
<svg class="a" style="left:620px;top:501px" width="10" height="10"><circle cx="4.8" cy="5.5" r="3" fill="none" stroke="#e0e0e0" stroke-width="0.9"/></svg>
<svg class="a" style="left:634px;top:499px" width="6" height="5"><polygon points="1,0.5 5.5,0.5 5.5,4.5" fill="#ddd"/></svg>
<div class="a" style="left:636px;top:512.5px;width:1px;height:67px;background:#3c3c3c"></div>
<div class="a" style="left:504px;top:579.5px;width:133px;height:1px;background:#3c3c3c"></div>
<div class="t" style="left:504px;top:584px;font-size:7px;color:#dcdcdc;letter-spacing:-0.1px;transform:scaleX(0.9);transform-origin:0 0">1 Layer</div>
<svg class="a" style="left:550px;top:582px" width="90" height="10" viewBox="550 582 90 10">
<g fill="none" stroke="#c8c8c8" stroke-width="0.9">
<circle cx="559" cy="587" r="2.8" stroke="#777"/><path d="M557,589 L555,591" stroke="#777"/>
<rect x="572" y="584" width="6" height="6.5"/><rect x="574" y="586" width="3" height="3" fill="#ccc" stroke="none"/>
<path d="M588,584 V586 H591 M590,585 H595 V590.5 H591 V587" />
<rect x="604" y="584.5" width="6.5" height="6.5" fill="#ddd" stroke="none"/><path d="M604,588.5 H607 V591.5" stroke="#555"/>
<path d="M620.5,585 H627 M621.5,585.5 V591 H626 V585.5" stroke="#777"/>
</g></svg>

<!-- STATUS BAR -->
<div class="a" style="left:24px;top:582px;width:440px;height:10px;background:#3a3a3a"></div>
<div class="a" style="left:27px;top:583px;width:25px;height:9px;background:#bdbdbd"></div>
<div class="t" style="-webkit-text-stroke:0;left:29px;top:586.5px;font-size:7.5px;color:#151515;letter-spacing:-0.2px">66,67%</div>
<div class="a" style="left:52px;top:583px;width:9px;height:9px;background:#5e5e5e"></div>
<svg class="a" style="left:54.5px;top:586.5px" width="5" height="4"><polygon points="0.5,0.5 4.5,0.5 2.5,3.5" fill="#eee"/></svg>
<svg class="a" style="left:64px;top:584px" width="24" height="8"><path d="M2.5,1 V7" stroke="#6a6a6a"/><polygon points="7,1 7,7 3,4" fill="#6a6a6a"/><polygon points="20,1 20,7 16,4" fill="#6a6a6a"/></svg>
<div class="a" style="left:89px;top:583px;width:26px;height:9px;background:#bdbdbd"></div>
<div class="t" style="-webkit-text-stroke:0;left:91px;top:586.5px;font-size:7.5px;color:#151515">1</div>
<div class="a" style="left:115px;top:583px;width:9px;height:9px;background:#5e5e5e"></div>
<svg class="a" style="left:117.5px;top:586.5px" width="5" height="4"><polygon points="0.5,0.5 4.5,0.5 2.5,3.5" fill="#eee"/></svg>
<svg class="a" style="left:127px;top:584px" width="24" height="8"><polygon points="4,1 4,7 8,4" fill="#6a6a6a"/><polygon points="14,1 14,7 18,4" fill="#6a6a6a"/><path d="M18.5,1 V7" stroke="#6a6a6a"/></svg>
<div class="a" style="left:152px;top:582px;width:1px;height:10px;background:#2f2f2f"></div>
<div class="t" style="left:200.5px;top:585px;font-size:7px;color:#d8d8d8;letter-spacing:-0.2px;transform:scaleX(0.92);transform-origin:0 0">Selection</div>
<div class="a" style="left:275px;top:582.5px;width:10px;height:9.5px;background:#555"></div>
<svg class="a" style="left:278px;top:585px" width="5" height="6"><polygon points="0.5,0.5 4.5,3 0.5,5.5" fill="#eee"/></svg>
<div class="a" style="left:285px;top:582px;width:179px;height:10px;background:#333"></div>
<svg class="a" style="left:288px;top:584.5px" width="6" height="7"><polygon points="5,0.5 5,6.5 1,3.5" fill="#eee"/></svg>
<div class="a" style="left:370px;top:583px;width:10px;height:9px;background:#9a9a9a"></div>
<svg class="a" style="left:456px;top:584.5px" width="6" height="7"><polygon points="1,0.5 1,6.5 5,3.5" fill="#eee"/></svg>
<div class="a" style="left:464px;top:582px;width:11px;height:10px;background:#3e3e3e"></div>

<!-- FLOATING ALIGN PANEL -->
<div class="a" style="left:489px;top:81px;width:144px;height:88px;background:#4a4a4a;border:1px solid #2c2c2c;box-shadow:1px 2px 3px rgba(0,0,0,0.45)"></div>
<div class="a" style="left:490px;top:82px;width:142px;height:6.5px;background:#2e2e2e"></div>
<svg class="a" style="left:614px;top:83px" width="18" height="6"><polygon points="4,0.3 1.5,2.5 4,4.7" fill="#ddd"/><polygon points="7,0.3 4.5,2.5 7,4.7" fill="#ddd"/><path d="M11.5,0.8 L15.5,4.5 M15.5,0.8 L11.5,4.5" stroke="#e6e6e6" stroke-width="1"/></svg>
<div class="a" style="left:490px;top:88.5px;width:142px;height:11.5px;background:#353535"></div>
<div class="a" style="left:490.5px;top:89px;width:38px;height:11px;background:#3b3b3b"></div>
<div class="t" style="left:494px;top:91.3px;font-size:7px;color:#a0a0a0;letter-spacing:-0.1px">Transform</div>
<div class="a" style="left:529px;top:88.5px;width:27px;height:11.5px;background:#4e4e4e"></div>
<svg class="a" style="left:532px;top:90.5px" width="4" height="8"><path d="M0.5,3 L2,1 L3.5,3 M0.5,5 L2,7 L3.5,5" stroke="#ddd" stroke-width="0.8" fill="none"/></svg>
<div class="t" style="left:537px;top:91.3px;font-size:7px;font-weight:bold;color:#e6e6e6;letter-spacing:-0.1px;transform:scaleX(0.88);transform-origin:0 0">Align</div>
<div class="a" style="left:557px;top:89px;width:39px;height:11px;background:#3b3b3b"></div>
<div class="t" style="left:561px;top:91.3px;font-size:7px;color:#a0a0a0;letter-spacing:-0.1px">Pathfinder</div>
<svg class="a" style="left:620px;top:92px" width="11" height="6"><polygon points="0.5,1.5 3.5,1.5 2,3.5" fill="#ddd"/><rect x="5" y="0" width="5" height="5.5" fill="#777"/></svg>
<div class="t" style="left:493px;top:104.3px;font-size:7px;color:#dcdcdc;letter-spacing:-0.05px;transform:scaleX(0.9);transform-origin:0 0">Align Objects:</div>
<div class="a" style="left:492px;top:134.5px;width:137px;height:1px;background:#3c3c3c"></div>
<div class="a" style="left:492px;top:135.5px;width:137px;height:0.5px;background:#555"></div>
<div class="t" style="left:493px;top:139.3px;font-size:7px;color:#dcdcdc;letter-spacing:-0.05px;transform:scaleX(0.91);transform-origin:0 0">Distribute Objects:</div>
<svg class="a" style="left:490px;top:112px" width="142" height="56" viewBox="490 112 142 56">
<g fill="none" stroke="#d0d0d0" stroke-width="0.9">
<!-- align left -->
<path d="M496.5,118.5 V127.5"/><rect x="497.5" y="119.5" width="5" height="3" fill="#bbb"/><rect x="497.5" y="123.5" width="7.5" height="3"/>
<!-- align h center -->
<path d="M522.5,118 V128.5"/><rect x="520.5" y="119.5" width="4" height="3" fill="#bbb"/><rect x="519" y="123.5" width="7" height="3"/>
<!-- align right -->
<path d="M549.5,118.5 V127.5"/><rect x="544" y="119.5" width="5" height="3" fill="#bbb"/><rect x="541" y="123.5" width="8" height="3"/>
<!-- align top -->
<path d="M572,118 H581"/><rect x="573" y="119" width="3" height="7.5"/><rect x="577" y="119" width="3" height="4.5" fill="#bbb"/>
<!-- align v center -->
<path d="M594.5,122.5 H603.5"/><rect x="595.5" y="119" width="3" height="7"/><rect x="599.5" y="120.5" width="3" height="4" fill="#bbb"/>
<!-- align bottom -->
<path d="M617,127 H626"/><rect x="618" y="118.5" width="3" height="8"/><rect x="622" y="122" width="3" height="4.5" fill="#bbb"/>
<!-- distribute top -->
<path d="M496,154.5 H505.5 M496,158.5 H505.5"/><rect x="498.5" y="155" width="4" height="2.5" fill="#bbb"/><rect x="498" y="158.5" width="5.5" height="3"/>
<path d="M518.5,155.5 H528 M518.5,159.5 H528"/><rect x="521" y="154" width="4" height="3" fill="#bbb"/><rect x="520.5" y="158" width="5.5" height="3"/>
<path d="M540.5,157 H551 M540.5,161.5 H551"/><rect x="543" y="154" width="4.5" height="3" fill="#bbb"/><rect x="543" y="158" width="5" height="3.5"/>
<!-- distribute left -->
<path d="M572.5,152.5 V163 M576.5,152.5 V163"/><rect x="573" y="155" width="3" height="5"/><rect x="577" y="155.5" width="3" height="4" fill="#bbb"/>
<path d="M596,152.5 V163 M600,152.5 V163"/><rect x="594.5" y="155" width="3" height="5"/><rect x="600.5" y="155.5" width="3" height="4" fill="#bbb"/>
<path d="M620.5,152.5 V163 M624.5,152.5 V163"/><rect x="617.5" y="155" width="3" height="5"/><rect x="621" y="155.5" width="3" height="4" fill="#bbb"/>
</g></svg>
</body></html>
